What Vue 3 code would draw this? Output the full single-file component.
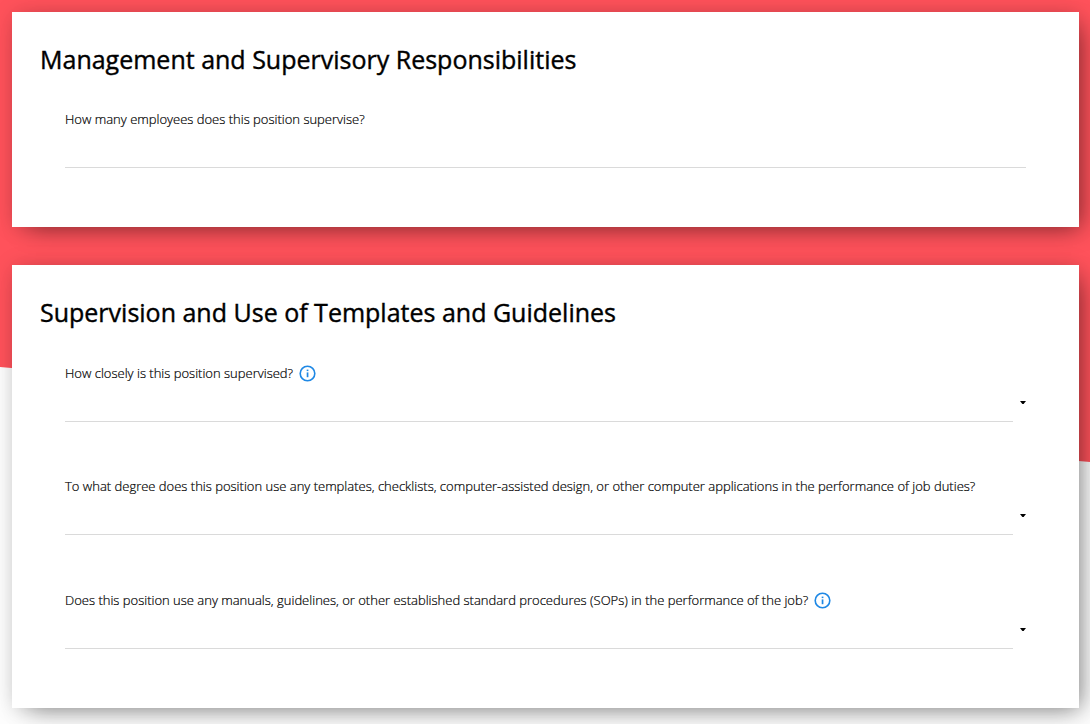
<script setup>
import { reactive } from 'vue'

const sections = [
  {
    title: 'Management and Supervisory Responsibilities',
    fields: [
      { id: 'employees', type: 'text', label: 'How many employees does this position supervise?' },
    ],
  },
  {
    title: 'Supervision and Use of Templates and Guidelines',
    fields: [
      { id: 'supervised', type: 'select', info: true, label: 'How closely is this position supervised?' },
      {
        id: 'templates',
        type: 'select',
        label:
          'To what degree does this position use any templates, checklists, computer-assisted design, or other computer applications in the performance of job duties?',
      },
      {
        id: 'manuals',
        type: 'select',
        info: true,
        label:
          'Does this position use any manuals, guidelines, or other established standard procedures (SOPs) in the performance of the job?',
      },
    ],
  },
]

const answers = reactive({ employees: '', supervised: '', templates: '', manuals: '' })
</script>

<template>
  <main class="page">
    <div class="backdrop"></div>
    <form class="form" @submit.prevent>
      <section v-for="section in sections" :key="section.title" class="card">
        <h2 class="title">{{ section.title }}</h2>
        <div class="fields">
          <div v-for="field in section.fields" :key="field.id" class="field">
            <div class="label-row">
              <label :for="field.id">{{ field.label }}</label>
              <button v-if="field.info" type="button" class="info" aria-label="More information">
                <svg viewBox="0 0 17 17" width="17" height="17" aria-hidden="true">
                  <circle cx="8.5" cy="8.5" r="7.3" fill="none" stroke="currentColor" stroke-width="1.6" />
                  <rect x="7.7" y="4.6" width="1.7" height="1.5" fill="currentColor" />
                  <rect x="7.7" y="7.4" width="1.7" height="4.8" fill="currentColor" />
                </svg>
              </button>
            </div>
            <input v-if="field.type === 'text'" :id="field.id" v-model="answers[field.id]" class="control" type="text" />
            <div v-else class="select-wrap">
              <select :id="field.id" v-model="answers[field.id]" class="control">
                <option value=""></option>
              </select>
              <svg class="caret" viewBox="0 0 6 3" width="6" height="3" aria-hidden="true">
                <path d="M0 0H6L3.6 3H2.4Z" fill="#000" />
              </svg>
            </div>
          </div>
        </div>
      </section>
    </form>
  </main>
</template>

<style>
body {
  margin: 0;
  background: #fdfdfd;
}
</style>

<style scoped>
.page {
  position: relative;
  overflow: hidden;
  font-family: 'Open Sans', 'Noto Sans', sans-serif;
  color: #000;
}
.backdrop {
  position: absolute;
  inset: 0;
  background: #ff525b;
  clip-path: polygon(0 0, 100% 0, 100% 462px, 0 367px);
}
.form {
  position: relative;
  display: flex;
  flex-direction: column;
  gap: 38px;
  padding: 12px 11px 16px 12px;
}
.card {
  padding: 28px 53px 59px 28px;
  background: #fff;
  box-shadow: 8px 8px 24px -8px rgba(0, 0, 0, 0.48), 0 0 20px rgba(0, 0, 0, 0.13);
}
.title {
  margin: 0 0 30px;
  font-size: 25px;
  line-height: 39px;
  font-weight: 400;
  -webkit-text-stroke: 0.4px #000;
}
.fields {
  display: flex;
  flex-direction: column;
  gap: 54px;
  padding-left: 25px;
}
.label-row {
  display: flex;
  align-items: center;
  gap: 6px;
  font-size: 13px;
  line-height: 20px;
  font-weight: 300;
  -webkit-text-stroke: 0.2px #000;
}
.info {
  flex: none;
  display: flex;
  height: 21px;
  align-items: flex-end;
  padding: 0 0 1px;
  border: 0;
  background: none;
  color: #1e88e5;
  cursor: pointer;
}
.control {
  display: block;
  box-sizing: border-box;
  width: 100%;
  height: 39px;
  padding: 0;
  border: 0;
  border-bottom: 1px solid #dadada;
  border-radius: 0;
  background: transparent;
  font: inherit;
  font-size: 13px;
  outline: none;
  appearance: none;
}
.select-wrap {
  display: flex;
  align-items: center;
  gap: 7px;
}
.select-wrap .control {
  flex: 1;
  min-width: 0;
}
.caret {
  flex: none;
}
</style>
